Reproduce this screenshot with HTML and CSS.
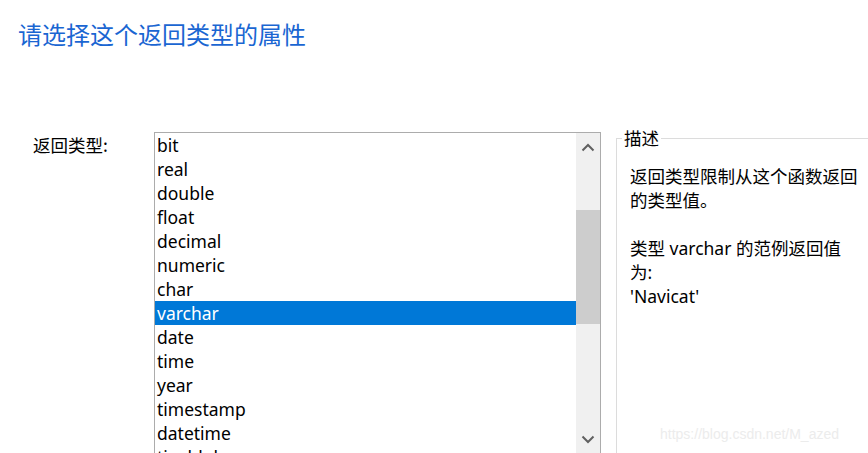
FILE: index.html
```html
<!DOCTYPE html>
<html lang="zh-CN">
<head>
<meta charset="utf-8">
<title>返回类型</title>
<link rel="stylesheet" href="styles.css">
</head>
<body>
<h1 class="title">请选择这个返回类型的属性</h1>
<div class="row">
  <div class="label">返回类型:</div>
  <div class="listbox">
    <ul class="items">
      <li>bit</li>
      <li>real</li>
      <li>double</li>
      <li>float</li>
      <li>decimal</li>
      <li>numeric</li>
      <li>char</li>
      <li class="selected">varchar</li>
      <li>date</li>
      <li>time</li>
      <li>year</li>
      <li>timestamp</li>
      <li>datetime</li>
      <li>tinyblob</li>
    </ul>
    <div class="scrollbar">
      <div class="arrow">
        <svg width="14" height="9" viewBox="0 0 14 9"><path d="M1.5 7.5 L7 2 L12.5 7.5" fill="none" stroke="#606060" stroke-width="2"/></svg>
      </div>
      <div class="track"><div class="thumb"></div></div>
      <div class="arrow">
        <svg width="14" height="9" viewBox="0 0 14 9"><path d="M1.5 1.5 L7 7 L12.5 1.5" fill="none" stroke="#606060" stroke-width="2"/></svg>
      </div>
    </div>
  </div>
  <fieldset class="group">
    <legend class="legend">描述</legend>
    <p class="desc">返回类型限制从这个函数返回<br>的类型值。<br><br>类型 varchar 的范例返回值<br>为:<br>'Navicat'</p>
  </fieldset>
</div>
<div class="watermark">https://blog.csdn.net/M_azed</div>
</body>
</html>
```
FILE: styles.css
```css
html, body {
  margin: 0;
  padding: 0;
}
body {
  width: 868px;
  height: 453px;
  overflow: hidden;
  position: relative;
  background: #ffffff;
  font-family: "Noto Sans", "Noto Sans CJK SC", sans-serif;
  color: #000000;
}
.title {
  margin: 0;
  padding: 19px 0 0 18px;
  font-family: "Noto Sans CJK SC", sans-serif;
  font-weight: normal;
  font-size: 24px;
  line-height: 29px;
  color: #1a66d2;
  height: 29px;
}
.row {
  display: flex;
  align-items: flex-start;
  margin-top: 84px;
}
.label {
  width: 121px;
  padding-left: 33px;
  padding-top: 1px;
  font-family: "Noto Sans CJK SC", sans-serif;
  font-size: 17.5px;
  line-height: 24px;
  flex: none;
}
.listbox {
  flex: none;
  width: 445px;
  height: 340px;
  border: 1px solid #acacac;
  display: flex;
}
.items {
  flex: 1;
  list-style: none;
  margin: 0;
  padding: 0;
  overflow: hidden;
}
.items li {
  height: 24px;
  line-height: 24px;
  padding-left: 2px;
  font-size: 17.5px;
  white-space: nowrap;
}
.items li.selected {
  background: #0078d7;
  color: #ffffff;
}
.scrollbar {
  width: 24px;
  background: #f0f0f0;
  display: flex;
  flex-direction: column;
  height: 320px;
}
.arrow {
  height: 28px;
  display: flex;
  align-items: center;
  justify-content: center;
  flex: none;
}
.track {
  flex: 1;
}
.thumb {
  margin-top: 49px;
  height: 114px;
  background: #cdcdcd;
}
.group {
  flex: none;
  margin: -6px 0 0 15px;
  padding: 14px 0 0 0;
  width: 300px;
  height: 400px;
  border: 1px solid #dcdcdc;
}
.legend {
  margin-left: 5px;
  padding: 0 2px 0 2px;
  font-family: "Noto Sans CJK SC", sans-serif;
  font-size: 17.5px;
  line-height: 24px;
}
.desc {
  margin: 0;
  padding-left: 13px;
  font-size: 17.5px;
  line-height: 24px;
  white-space: nowrap;
}
.watermark {
  position: absolute;
  left: 660px;
  top: 426px;
  font-family: "Liberation Sans", sans-serif;
  font-size: 14px;
  color: #ececec;
}
```
